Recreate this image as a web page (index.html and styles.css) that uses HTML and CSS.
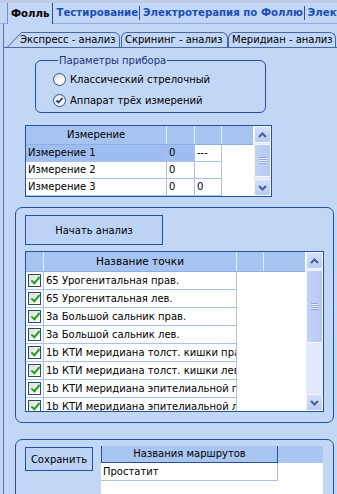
FILE: index.html
```html
<!DOCTYPE html>
<html lang="ru">
<head>
    <meta charset="UTF-8">
    <meta name="viewport" content="width=device-width, initial-scale=1.0">
    <title>Фолль</title>
    <link rel="stylesheet" href="styles.css">
</head>
<body>
    <div class="window">
        <div class="top-tabs">
            <span class="top-tab active">Фолль</span>
            <span class="top-tab">Тестирование</span>
            <span class="top-tab">Электротерапия по Фоллю</span>
            <span class="top-tab">Электроакупунктура</span>
        </div>

        <div class="page">
            <div class="sub-tabs">
                <div class="sub-tab first">
                    <svg class="tab-shape" width="113" height="15"><path d="M0.5 15 L14.5 0.5 L106.5 0.5 Q112.5 0.5 112.5 6.5 L112.5 15"/></svg>
                    <span class="tab-label">Экспресс - анализ</span>
                </div>
                <div class="sub-tab second">Скрининг - анализ</div>
                <div class="sub-tab third">Меридиан - анализ</div>
            </div>

            <div class="sub-panel">
                <fieldset class="params">
                    <legend>Параметры прибора</legend>
                    <div class="radio-row">
                        <span class="radio"></span>
                        Классический стрелочный
                    </div>
                    <div class="radio-row">
                        <span class="radio"><svg width="11" height="11"><path d="M2.5 5.5 L4.5 7.5 L8.5 3" /></svg></span>
                        Аппарат трёх измерений
                    </div>
                </fieldset>

                <div class="grid measure-grid">
                    <div class="grid-body">
                        <div class="grid-head">
                            <div class="cell m-name">Измерение</div>
                            <div class="cell m-val"></div>
                            <div class="cell m-val2"></div>
                        </div>
                        <div class="grid-row">
                            <div class="cell m-name selected">Измерение 1</div>
                            <div class="cell m-val selected">0</div>
                            <div class="cell m-val2">---</div>
                        </div>
                        <div class="grid-row">
                            <div class="cell m-name">Измерение 2</div>
                            <div class="cell m-val">0</div>
                            <div class="cell m-val2"></div>
                        </div>
                        <div class="grid-row">
                            <div class="cell m-name">Измерение 3</div>
                            <div class="cell m-val">0</div>
                            <div class="cell m-val2">0</div>
                        </div>
                    </div>
                    <div class="scrollbar">
                        <div class="sb-btn"><svg width="9" height="6"><path d="M1 5 L4.5 1.5 L8 5"/></svg></div>
                        <div class="sb-track">
                            <div class="sb-thumb short"><span class="grip"></span></div>
                        </div>
                        <div class="sb-btn"><svg width="9" height="6"><path d="M1 1 L4.5 4.5 L8 1"/></svg></div>
                    </div>
                </div>

                <div class="group analysis">
                    <button class="btn start-btn">Начать анализ</button>
                    <div class="grid points-grid">
                        <div class="grid-body">
                            <div class="grid-head">
                                <div class="cell p-check"></div>
                                <div class="cell p-name">Название точки</div>
                                <div class="cell p-extra"></div>
                            </div>
                            <div class="point-rows">
                                <div class="grid-row">
                                    <div class="cell p-check"><span class="checkbox"></span></div>
                                    <div class="cell p-name">65 Урогенитальная прав.</div>
                                </div>
                                <div class="grid-row">
                                    <div class="cell p-check"><span class="checkbox"></span></div>
                                    <div class="cell p-name">65 Урогенитальная лев.</div>
                                </div>
                                <div class="grid-row">
                                    <div class="cell p-check"><span class="checkbox"></span></div>
                                    <div class="cell p-name">3а Большой сальник прав.</div>
                                </div>
                                <div class="grid-row">
                                    <div class="cell p-check"><span class="checkbox"></span></div>
                                    <div class="cell p-name">3а Большой сальник лев.</div>
                                </div>
                                <div class="grid-row">
                                    <div class="cell p-check"><span class="checkbox"></span></div>
                                    <div class="cell p-name">1b КТИ меридиана толст. кишки прав.</div>
                                </div>
                                <div class="grid-row">
                                    <div class="cell p-check"><span class="checkbox"></span></div>
                                    <div class="cell p-name">1b КТИ меридиана толст. кишки лев.</div>
                                </div>
                                <div class="grid-row">
                                    <div class="cell p-check"><span class="checkbox"></span></div>
                                    <div class="cell p-name">1b КТИ меридиана эпителиальной прав.</div>
                                </div>
                                <div class="grid-row">
                                    <div class="cell p-check"><span class="checkbox"></span></div>
                                    <div class="cell p-name">1b КТИ меридиана эпителиальной лев.</div>
                                </div>
                            </div>
                        </div>
                        <div class="scrollbar">
                            <div class="sb-btn"><svg width="9" height="6"><path d="M1 5 L4.5 1.5 L8 5"/></svg></div>
                            <div class="sb-track">
                                <div class="sb-thumb long"><span class="grip"></span></div>
                            </div>
                            <div class="sb-btn"><svg width="9" height="6"><path d="M1 1 L4.5 4.5 L8 1"/></svg></div>
                        </div>
                    </div>
                </div>

                <div class="group routes">
                    <button class="btn save-btn">Сохранить</button>
                    <div class="routes-grid">
                        <div class="routes-head">
                            <div class="route-title">Названия маршрутов</div>
                        </div>
                        <div class="route-row">Простатит</div>
                    </div>
                </div>
            </div>
        </div>
    </div>
</body>
</html>
```

FILE: styles.css
```css
body {
    margin: 0;
    font-family: "DejaVu Sans", Verdana, sans-serif;
    font-size: 10px;
    color: #000;
    background-color: #c2d6f6;
}
.window {
    width: 337px;
    height: 494px;
    overflow: hidden;
    background: linear-gradient(#bccbe6 0, #bccbe6 3px, #c2d6f6 3px);
}

/* top tab strip */
.top-tabs {
    display: flex;
    align-items: center;
    height: 20px;
    padding: 3px 0 0 7px;
    border-bottom: 1px solid #8fadde;
    white-space: nowrap;
}
.top-tab {
    font-size: 10.2px;
    font-weight: bold;
    color: #1b4fb5;
    line-height: 14px;
    padding: 0 1px 0 3px;
    border-right: 1px solid #23529e;
}
.top-tab:last-child {
    border-right: none;
}
.top-tab.active {
    color: #000;
    height: 21px;
    line-height: 21px;
    align-self: flex-start;
    padding: 0 3px;
    border-left: 1px solid #7391c6;
    border-right: 1px solid #23529e;
    background: #c2d6f6;
}

.page {
    margin-left: 3px;
    border-left: 1px solid #5a77ab;
    height: 470px;
    padding-top: 8px;
}

/* inner tabs */
.sub-tabs {
    display: flex;
    height: 15px;
    padding-left: 3px;
    border-bottom: 1px solid #4768a3;
}
.sub-tab {
    box-sizing: border-box;
    height: 15px;
    line-height: 14px;
    border: 1px solid #4768a3;
    border-bottom: none;
    border-radius: 6px 6px 0 0;
    padding-left: 3px;
    white-space: nowrap;
}
.sub-tab.first {
    position: relative;
    width: 113px;
    border: none;
    padding-left: 13px;
    padding-top: 1px;
    margin-right: 1px;
}
.tab-shape {
    position: absolute;
    left: 0;
    top: 0;
}
.tab-shape path {
    fill: none;
    stroke: #4768a3;
}
.tab-label {
    position: relative;
}
.sub-tab.second {
    width: 107px;
}
.sub-tab.third {
    width: 108px;
}

.sub-panel {
    padding-top: 6px;
}

/* device parameters */
.params {
    width: 231px;
    box-sizing: border-box;
    margin: 0 0 0 31px;
    padding: 4px 0 4px 17px;
    border: 1px solid #23529e;
    border-radius: 6px;
}
.params legend {
    padding: 0 1px;
    margin-left: 5px;
    line-height: 13px;
    color: #17357a;
}
.radio-row {
    display: flex;
    align-items: center;
    gap: 4px;
    height: 16px;
}
.radio-row + .radio-row {
    margin-top: 5px;
}
.radio {
    box-sizing: border-box;
    width: 13px;
    height: 13px;
    border: 1px solid #2d5a8c;
    border-radius: 50%;
    background: radial-gradient(circle at 65% 70%, #fff 20%, #dcdcd6 90%);
    display: flex;
}
.radio svg path {
    fill: none;
    stroke: #1d3a86;
    stroke-width: 1.8;
}

/* grids */
.grid {
    display: flex;
    border: 1px solid #23529e;
    background: #fff;
}
.grid-body {
    flex: 1;
    overflow: hidden;
}
.grid-head {
    display: flex;
    background: #a7c3ef;
    border-bottom: 1px solid #8caee2;
}
.grid-head .cell {
    border-right: 1px solid #e3ecfb;
    text-align: center;
}
.grid-row {
    display: flex;
    background: #fff;
}
.cell {
    box-sizing: border-box;
    flex-shrink: 0;
    white-space: nowrap;
    overflow: hidden;
}
.grid-row .cell {
    border-right: 1px solid #a9c2ea;
    border-bottom: 1px solid #a9c2ea;
    padding-left: 2px;
}
.cell.selected {
    background: #9ebdf0;
}

.measure-grid {
    margin: 12px 0 0 21px;
    width: 247px;
    box-sizing: border-box;
}
.measure-grid .grid-head {
    height: 18px;
    line-height: 17px;
}
.measure-grid .grid-row {
    height: 17px;
    line-height: 16px;
}
.m-name {
    width: 141px;
}
.m-val {
    width: 28px;
}
.m-val2 {
    width: 27px;
}

/* scrollbar */
.scrollbar {
    width: 17px;
    display: flex;
    flex-direction: column;
    background: #e2e9fa;
    margin-left: 1px;
}
.sb-btn {
    box-sizing: border-box;
    height: 17px;
    border: 1px solid #f3f7ff;
    border-radius: 2px;
    background: linear-gradient(#d5e1fb, #b9cbf5);
    display: flex;
    align-items: center;
    justify-content: center;
}
.sb-btn path {
    fill: none;
    stroke: #4a5f8f;
    stroke-width: 2;
}
.sb-track {
    flex: 1;
    padding: 1px 0;
}
.sb-thumb {
    box-sizing: border-box;
    border: 1px solid #f3f7ff;
    border-radius: 2px;
    background: linear-gradient(90deg, #c3d3f8, #b7c9f4);
    display: flex;
    align-items: center;
    justify-content: center;
}
.sb-thumb.short {
    height: 33px;
}
.sb-thumb.long {
    height: 73px;
}
.grip {
    width: 7px;
    height: 7px;
    background: repeating-linear-gradient(#8ea6da 0, #8ea6da 1px, #eef3fe 1px, #eef3fe 2px);
}

/* group boxes */
.group {
    box-sizing: border-box;
    width: 319px;
    margin-left: 11px;
    border: 1px solid #23529e;
    border-radius: 7px;
}
.btn {
    display: block;
    box-sizing: border-box;
    font-family: "DejaVu Sans", Verdana, sans-serif;
    font-size: 10px;
    color: #000;
    border: 1px solid #23529e;
    background: #bdd3f6;
    padding: 0;
}
.analysis {
    margin-top: 10px;
    padding: 7px 0 10px 9px;
}
.start-btn {
    width: 138px;
    height: 30px;
}
.points-grid {
    margin-top: 6px;
    width: 299px;
    height: 161px;
    box-sizing: border-box;
}
.points-grid .grid-head {
    height: 19px;
    line-height: 18px;
    font-size: 10.5px;
}
.point-rows {
    background: #fff;
}
.points-grid .grid-row {
    height: 18px;
    line-height: 17px;
}
.p-check {
    width: 18px;
    display: flex;
    align-items: center;
}
.grid-row .p-check {
    padding-left: 2px;
}
.p-name {
    width: 193px;
}
.p-extra {
    width: 27px;
}
.checkbox {
    box-sizing: border-box;
    width: 13px;
    height: 13px;
    border: 1px solid #2b4f6b;
    background: linear-gradient(135deg, #dedfd8, #fff);
    position: relative;
}
.checkbox::after {
    content: "";
    position: absolute;
    left: 3.5px;
    top: 0;
    width: 3px;
    height: 7px;
    border: solid #22a222;
    border-width: 0 2px 2px 0;
    transform: rotate(40deg);
}

/* routes */
.routes {
    margin-top: 16px;
    height: 70px;
    padding: 6px 0 0 9px;
    display: flex;
    align-items: flex-start;
}
.save-btn {
    width: 68px;
    height: 24px;
    margin-top: 1px;
}
.routes-grid {
    margin-left: 8px;
    width: 222px;
    height: 60px;
    background: #fff;
}
.routes-head {
    height: 17px;
    background: #a9c6f2;
}
.route-title {
    box-sizing: border-box;
    width: 177px;
    height: 17px;
    line-height: 16px;
    text-align: center;
    border: 1px solid #23529e;
    border-top: none;
}
.route-row {
    box-sizing: border-box;
    width: 177px;
    height: 18px;
    line-height: 17px;
    padding-left: 2px;
    border-right: 1px solid #a9c2ea;
    border-bottom: 1px solid #a9c2ea;
}
```
